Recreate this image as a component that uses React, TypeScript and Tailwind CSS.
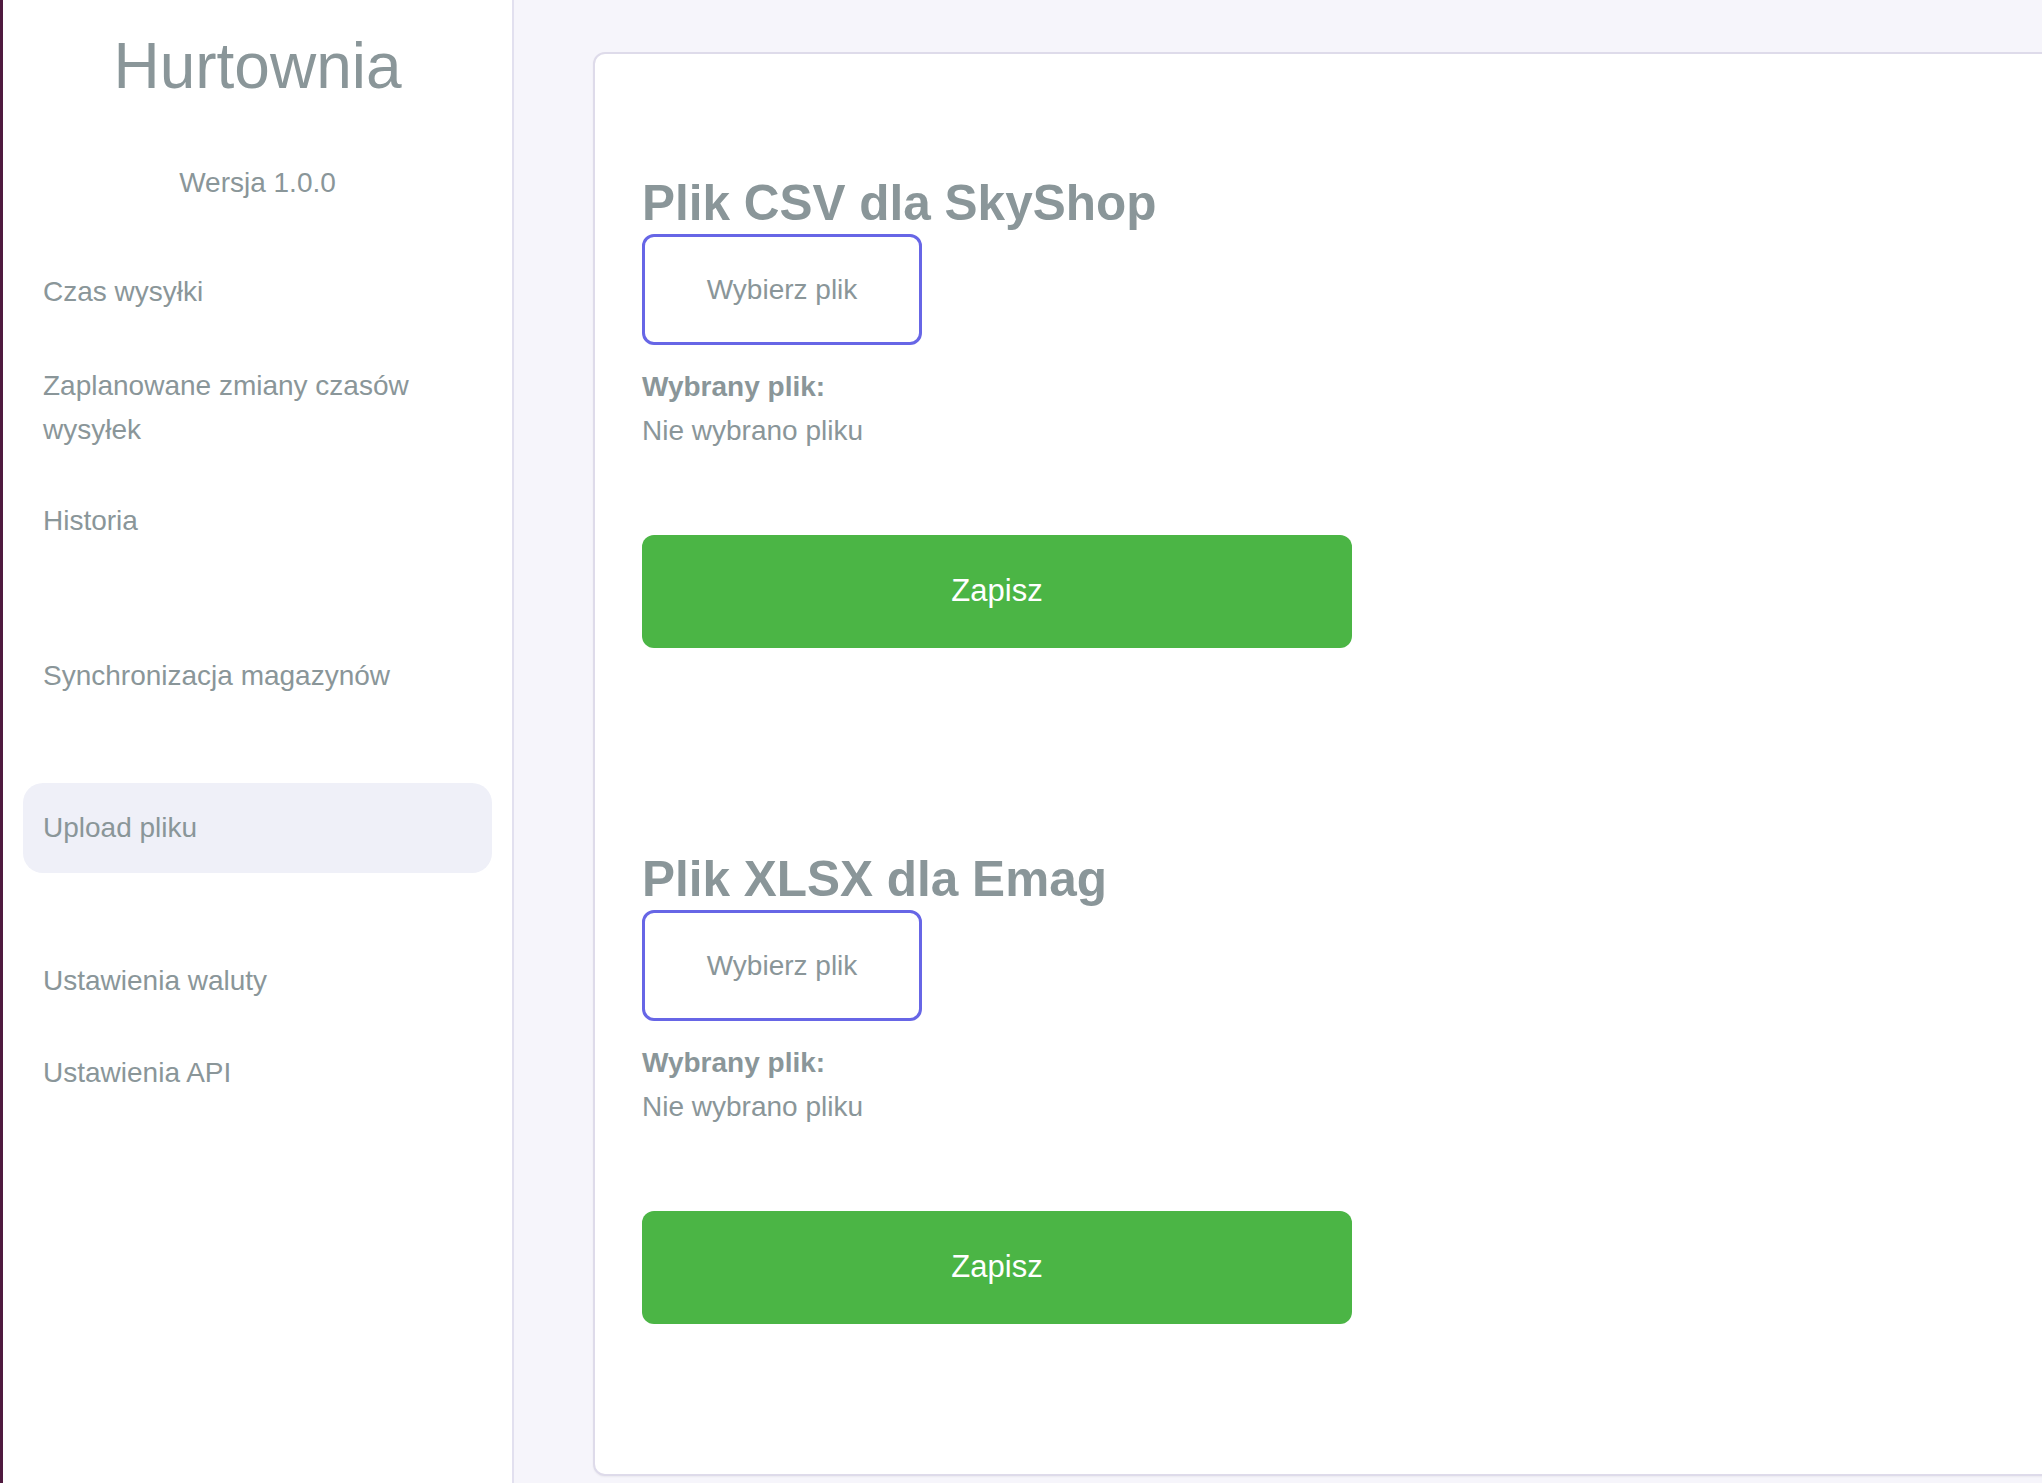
const menu = [
  { label: "Czas wysyłki", extra: "py-[23px]" },
  { label: "Zaplanowane zmiany czasów wysyłek", extra: "pt-[25px] pb-[22px]" },
  { label: "Historia", extra: "py-[23px]" },
  { label: "Synchronizacja magazynów", extra: "py-[23px] mt-[63px]" },
  { label: "Upload pliku", extra: "py-[23px] mt-[60px] bg-[#eff0f8]" },
  { label: "Ustawienia waluty", extra: "py-[23px] mt-[61px]" },
  { label: "Ustawienia API", extra: "py-[23px]" },
];

const sections = [
  { id: 1, title: "Plik CSV dla SkyShop", extra: "" },
  { id: 2, title: "Plik XLSX dla Emag", extra: "mt-[203px]" },
];

const App = () => {
  return (
    <div className="flex h-[1483px] w-full overflow-hidden font-['Liberation_Sans',Arial,sans-serif] text-[#8a9699]">
      <div className="w-[3px] shrink-0 bg-[#4f1a3f]" />

      {/* sidebar */}
      <aside className="flex w-[511px] shrink-0 flex-col border-r-2 border-[#e2e0ef] bg-white px-[20px]">
        <h1 className="pt-[29px] text-center text-[64px] leading-[74px] font-normal">Hurtownia</h1>
        <p className="mt-[58px] text-center text-[28px] leading-[44px]">Wersja 1.0.0</p>
        <nav className="mt-[42px] flex flex-col gap-[2px]">
          {menu.map((item) => (
            <a
              key={item.label}
              href="#"
              className={`rounded-[20px] px-[20px] text-[28px] leading-[44px] ${item.extra}`}
            >
              {item.label}
            </a>
          ))}
        </nav>
      </aside>

      {/* main */}
      <main className="flex-1 overflow-hidden bg-[#f6f5fb] pt-[52px] pl-[79px]">
        <div className="w-[1600px] rounded-[12px] border-2 border-[#dedbea] bg-white pt-[121px] pb-[150px] pl-[47px] shadow-[0_1px_2px_rgba(0,0,0,0.05)]">
          {sections.map((s) => (
            <section key={s.id} className={`flex flex-col items-start ${s.extra}`}>
              <h2 className="text-[49.5px] leading-[56px] font-bold">{s.title}</h2>
              <button className="mt-[3px] flex h-[111px] w-[280px] items-center justify-center rounded-[12px] border-[3px] border-[#6766e6] bg-white text-[28px]">
                Wybierz plik
              </button>
              <p className="mt-[20px] text-[28px] leading-[44px] font-bold">Wybrany plik:</p>
              <p className="text-[28px] leading-[44px]">Nie wybrano pliku</p>
              <button className="mt-[82px] flex h-[113px] w-[710px] items-center justify-center rounded-[12px] bg-[#4bb545] text-[31px] text-white">
                Zapisz
              </button>
            </section>
          ))}
        </div>
      </main>
    </div>
  );
};

export default App;
